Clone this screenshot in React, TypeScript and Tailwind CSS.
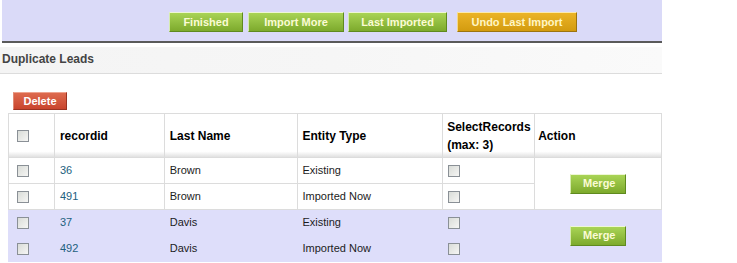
import React from 'react';

const greenBtn =
  'h-[20px] px-3 text-[11px] font-bold text-[#fbfbd4] bg-gradient-to-b from-[#a9d455] to-[#7daa2c] border border-t-[#eef7d6] border-l-[#d6ebb0] border-r-[#5f8a1f] border-b-[#5f8a1f] leading-none';

function Box() {
  return (
    <div className="w-[12px] h-[12px] border border-[#8a9096] bg-gradient-to-br from-[#d9dcd8] to-[#f6f6f4]" />
  );
}

type Row = { id: string; last: string; type: string };

const groups: { bg: string; rows: Row[] }[] = [
  { bg: 'bg-white', rows: [{ id: '36', last: 'Brown', type: 'Existing' }, { id: '491', last: 'Brown', type: 'Imported Now' }] },
  { bg: 'bg-[#dedefa]', rows: [{ id: '37', last: 'Davis', type: 'Existing' }, { id: '492', last: 'Davis', type: 'Imported Now' }] },
];

export default function App() {
  return (
    <div className="w-[737px] h-[263px] bg-white overflow-hidden" style={{ fontFamily: '"Liberation Sans", Arial, sans-serif' }}>
      <div className="ml-[2px] w-[660px] h-[43px] bg-[#dadaf8] border-b-[2px] border-[#5a5a5a] flex items-start pt-[12px] pl-[167px]">
        <button className={`${greenBtn} w-[74px]`}>Finished</button>
        <button className={`${greenBtn} w-[96px] ml-[5px]`}>Import More</button>
        <button className={`${greenBtn} w-[99px] ml-[4px]`}>Last Imported</button>
        <button className="ml-[10px] w-[120px] h-[20px] text-[11px] font-bold leading-none text-[#fff6c4] bg-gradient-to-b from-[#ebb426] to-[#d39b0e] border border-t-[#fbeab0] border-l-[#f3d98a] border-r-[#9c7410] border-b-[#9c7410]">
          Undo Last Import
        </button>
      </div>

      <div className="mt-[4px] w-[662px] h-[27px] bg-gradient-to-r from-[#f4f4f4] via-[#f6f6f6] to-[#fafafa] border-b border-[#dcdcdc] flex items-center pl-[2px] pb-[3px]">
        <span className="text-[12px] font-bold text-[#444]">Duplicate Leads</span>
      </div>

      <div className="flex pl-[13px] pt-[18px]">
        <button className="w-[54px] h-[18px] text-[11px] font-bold leading-none text-white bg-gradient-to-b from-[#dd6a4e] to-[#c9442d] border border-t-[#eea38f] border-l-[#e08a74] border-r-[#9a3322] border-b-[#9a3322]">
          Delete
        </button>
      </div>

      <table className="ml-[8px] mt-[3px] border-collapse text-[11px] text-[#1c1c1c]" style={{ width: 654 }}>
        <colgroup>
          <col style={{ width: 46 }} />
          <col style={{ width: 110 }} />
          <col style={{ width: 134 }} />
          <col style={{ width: 145 }} />
          <col style={{ width: 92 }} />
          <col style={{ width: 127 }} />
        </colgroup>
        <thead>
          <tr className="h-[44px] bg-gradient-to-b from-white from-85% to-[#dcdcdc] text-[12px] font-bold text-black text-left">
            <th className="border border-[#dcdcdc] pl-[8px]"><Box /></th>
            <th className="border border-[#dcdcdc] pl-[5px] font-bold">recordid</th>
            <th className="border border-[#dcdcdc] pl-[5px] font-bold">Last Name</th>
            <th className="border border-[#dcdcdc] pl-[4px] font-bold">Entity Type</th>
            <th className="border border-[#dcdcdc] pl-[4px] font-bold leading-[18px]">SelectRecords<br />(max: 3)</th>
            <th className="border border-[#dcdcdc] pl-[3px] font-bold">Action</th>
          </tr>
        </thead>
        <tbody>
          {groups.map((g, gi) =>
            g.rows.map((r, ri) => {
              const line = gi === 0 ? 'border border-[#dcdcdc]' : 'border border-[#dedefa]';
              return (
                <tr key={r.id} className={`h-[26px] ${g.bg}`}>
                  <td className={`${line} pl-[8px]`}><Box /></td>
                  <td className={`${line} pl-[5px] text-[#22607e]`}>{r.id}</td>
                  <td className={`${line} pl-[5px]`}>{r.last}</td>
                  <td className={`${line} pl-[4px]`}>{r.type}</td>
                  <td className={`${line} pl-[5px]`}><Box /></td>
                  {ri === 0 && (
                    <td rowSpan={2} className={`${line} text-center`}>
                      <button className={`${greenBtn} w-[56px] h-[19px] px-0 text-[11px]`}>Merge</button>
                    </td>
                  )}
                </tr>
              );
            })
          )}
        </tbody>
      </table>
    </div>
  );
}
